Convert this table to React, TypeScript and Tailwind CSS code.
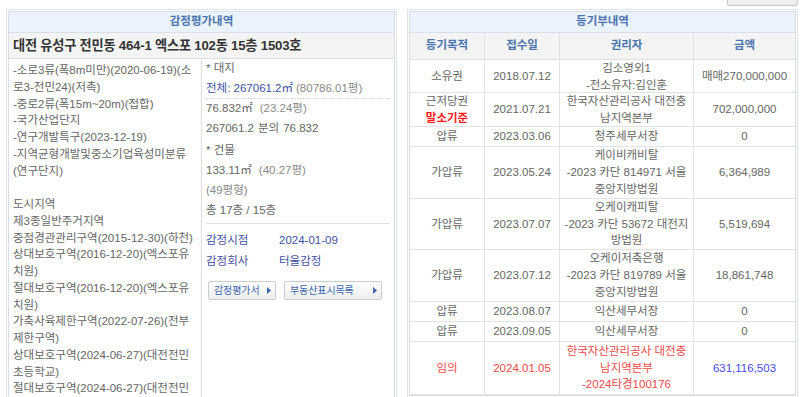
import { FunctionComponent } from "react";

interface IRegistryRow {
  h: string;
  purpose: string[];
  date: string;
  holder: string[];
  amount: string;
  auction?: boolean;
  baseline?: boolean;
}

const leftLines: string[] = [
  "-소로3류(폭8m미만)(2020-06-19)(소",
  "로3-전민24)(저촉)",
  "-중로2류(폭15m~20m)(접합)",
  "-국가산업단지",
  "-연구개발특구(2023-12-19)",
  "-지역균형개발및중소기업육성미분류",
  "(연구단지)",
  "",
  "도시지역",
  "제3종일반주거지역",
  "중점경관관리구역(2015-12-30)(하천)",
  "상대보호구역(2016-12-20)(엑스포유",
  "치원)",
  "절대보호구역(2016-12-20)(엑스포유",
  "치원)",
  "가축사육제한구역(2022-07-26)(전부",
  "제한구역)",
  "상대보호구역(2024-06-27)(대전전민",
  "초등학교)",
  "절대보호구역(2024-06-27)(대전전민",
];

const registryRows: IRegistryRow[] = [
  { h: "h-[33px]", purpose: ["소유권"], date: "2018.07.12", holder: ["김소영외1", "-전소유자:김인훈"], amount: "매매270,000,000" },
  { h: "h-[34px]", purpose: ["근저당권"], baseline: true, date: "2021.07.21", holder: ["한국자산관리공사 대전충", "남지역본부"], amount: "702,000,000" },
  { h: "h-[20px]", purpose: ["압류"], date: "2023.03.06", holder: ["청주세무서장"], amount: "0" },
  { h: "h-[52px]", purpose: ["가압류"], date: "2023.05.24", holder: ["케이비캐비탈", "-2023 카단 814971 서울", "중앙지방법원"], amount: "6,364,989" },
  { h: "h-[51px]", purpose: ["가압류"], date: "2023.07.07", holder: ["오케이캐피탈", "-2023 카단 53672 대전지", "방법원"], amount: "5,519,694" },
  { h: "h-[52px]", purpose: ["가압류"], date: "2023.07.12", holder: ["오케이저축은행", "-2023 카단 819789 서울", "중앙지방법원"], amount: "18,861,748" },
  { h: "h-[20px]", purpose: ["압류"], date: "2023.08.07", holder: ["익산세무서장"], amount: "0" },
  { h: "h-[20px]", purpose: ["압류"], date: "2023.09.05", holder: ["익산세무서장"], amount: "0" },
  { h: "h-[53px]", purpose: ["임의"], auction: true, date: "2024.01.05", holder: ["한국자산관리공사 대전충", "남지역본부", "-2024타경100176"], amount: "631,116,503" },
];

const Arrow = () => (
  <svg width="4" height="7" viewBox="0 0 4 7" className="shrink-0">
    <path d="M0 0 L4 3.5 L0 7 Z" fill="#3c66b0" />
  </svg>
);

const LinkButton: FunctionComponent<{ label: string; w: string }> = ({ label, w }) => (
  <div
    className={`${w} h-[19px] flex items-center justify-between pl-[5px] pr-[4px] border border-[#c9ccd0] rounded-[2px] bg-gradient-to-b from-white to-[#eeeeee] text-[10px] tracking-[-0.1px] text-[#3c66b0] whitespace-nowrap`}
  >
    <span>{label}</span>
    <Arrow />
  </div>
);

const AppraisalPanel = () => (
  <div className="w-[391px] shrink-0 border border-[#dfe3e8] p-[1px]">
    <div className="border border-[#d7dee7] h-[400px]">
      {/* title */}
      <div className="h-[21px] flex items-center justify-center bg-[#eaf2fb] border-b border-[#d6e0ec] font-bold text-[#4a74ad]">
        감정평가내역
      </div>
      {/* address */}
      <div className="h-[26px] flex items-center pl-[4px] bg-[#f4f4f4] border-b border-[#dddddd] text-[13.2px] font-bold text-[#333] tracking-[-0.2px]">
        대전 유성구 전민동 464-1 엑스포 102동 15층 1503호
      </div>
      <div className="flex">
        {/* zoning */}
        <div className="w-[193px] shrink-0 border-r border-[#dddddd] pl-[4px] pt-[3px] leading-[16.75px] overflow-hidden">
          {leftLines.map((line, i) => (
            <div key={i} className="h-[16.75px] whitespace-nowrap">
              {line}
            </div>
          ))}
        </div>
        {/* land / building */}
        <div className="flex-1 px-[4px]">
          <div className="h-[20px] flex items-center">* 대지</div>
          <div className="h-[20px] flex items-center border-b border-dotted border-[#d4d4d4] whitespace-nowrap">
            <span className="text-[#3f4fa6]">전체: 267061.2㎡</span>
            <span className="ml-[3px] text-[#8a8a8a]">(80786.01평)</span>
          </div>
          <div className="h-[20px] flex items-center whitespace-nowrap">
            <span>76.832㎡</span>
            <span className="ml-[7px] text-[#8a8a8a]">(23.24평)</span>
          </div>
          <div className="h-[19px] flex items-center gap-[4px] whitespace-nowrap">
            <span>267061.2</span>
            <span>분의</span>
            <span>76.832</span>
          </div>
          <div className="mt-[3px] h-[20px] flex items-center">* 건물</div>
          <div className="h-[20px] flex items-center whitespace-nowrap">
            <span>133.11㎡</span>
            <span className="ml-[7px] text-[#8a8a8a]">(40.27평)</span>
          </div>
          <div className="h-[20px] flex items-center text-[#8a8a8a]">(49평형)</div>
          <div className="h-[20px] flex items-center">총 17층 / 15층</div>
          <div className="mt-[2px] border-t border-[#e3e3e3]" />
          <div className="mt-[7px] h-[20px] flex items-center text-[#3f4fa6]">
            <span className="w-[73px] shrink-0">감정시점</span>
            <span>2024-01-09</span>
          </div>
          <div className="h-[21px] flex items-center text-[#3f4fa6]">
            <span className="w-[73px] shrink-0">감정회사</span>
            <span>터울감정</span>
          </div>
          <div className="mt-[9px] flex gap-[8px] pl-[2px]">
            <LinkButton label="감정평가서" w="w-[68px]" />
            <LinkButton label="부동산표시목록" w="w-[98px]" />
          </div>
        </div>
      </div>
    </div>
  </div>
);

const RegistryPanel = () => (
  <div className="w-[391px] shrink-0 border border-[#dfe3e8] p-[1px]">
    <div className="border border-[#d7dee7]">
      <div className="h-[21px] flex items-center justify-center bg-[#eaf2fb] border-b border-[#d6e0ec] font-bold text-[#4a74ad]">
        등기부내역
      </div>
      {/* column headers */}
      <div className="grid grid-cols-[75px_75px_134px_1fr] h-[27px] bg-[#f4f4f4] border-b border-[#e0e0e0] font-bold text-[#4a74ad]">
        <div className="flex items-center justify-center border-r border-[#e0e0e0]">등기목적</div>
        <div className="flex items-center justify-center border-r border-[#e0e0e0]">접수일</div>
        <div className="flex items-center justify-center border-r border-[#e0e0e0]">권리자</div>
        <div className="flex items-center justify-center">금액</div>
      </div>
      {registryRows.map((row, i) => (
        <div
          key={i}
          className={`grid grid-cols-[75px_75px_134px_1fr] ${row.h} border-b border-[#e3e3e3] leading-[16.7px] ${
            row.auction ? "text-[#f24a4a]" : "text-[#666]"
          }`}
        >
          <div className="flex flex-col items-center justify-center border-r border-[#e3e3e3]">
            {row.purpose.map((p) => (
              <span key={p}>{p}</span>
            ))}
            {row.baseline && <span className="text-[#ff1a1a] font-semibold">말소기준</span>}
          </div>
          <div className="flex items-center justify-center border-r border-[#e3e3e3]">{row.date}</div>
          <div className="flex flex-col items-center justify-center border-r border-[#e3e3e3] whitespace-nowrap">
            {row.holder.map((h) => (
              <span key={h}>{h}</span>
            ))}
          </div>
          <div className={`flex items-center justify-center ${row.auction ? "text-[#4a4af0]" : ""}`}>
            {row.amount}
          </div>
        </div>
      ))}
    </div>
  </div>
);

export default function App() {
  return (
    <div className="w-[800px] h-[397px] overflow-hidden bg-white text-[11.5px] text-[#666] font-['Liberation_Sans','Noto_Sans_CJK_KR',sans-serif]">
      {/* clipped toolbar button */}
      <div className="h-[6px] overflow-hidden flex justify-end items-end pr-[2px]">
        <div className="shrink-0 h-[22px] w-[71px] flex items-center gap-[5px] px-[5px] border border-[#c4c7cc] rounded-[2px] bg-gradient-to-b from-white to-[#ececec] text-[#666]">
          <span className="w-[8px] h-[9px] border border-[#5a7fc0] bg-[#e6eefa]" />
          <span className="whitespace-nowrap">목록보기</span>
        </div>
      </div>
      <div className="mt-[3px] pl-[6px] flex gap-[10px]">
        <AppraisalPanel />
        <RegistryPanel />
      </div>
    </div>
  );
}
